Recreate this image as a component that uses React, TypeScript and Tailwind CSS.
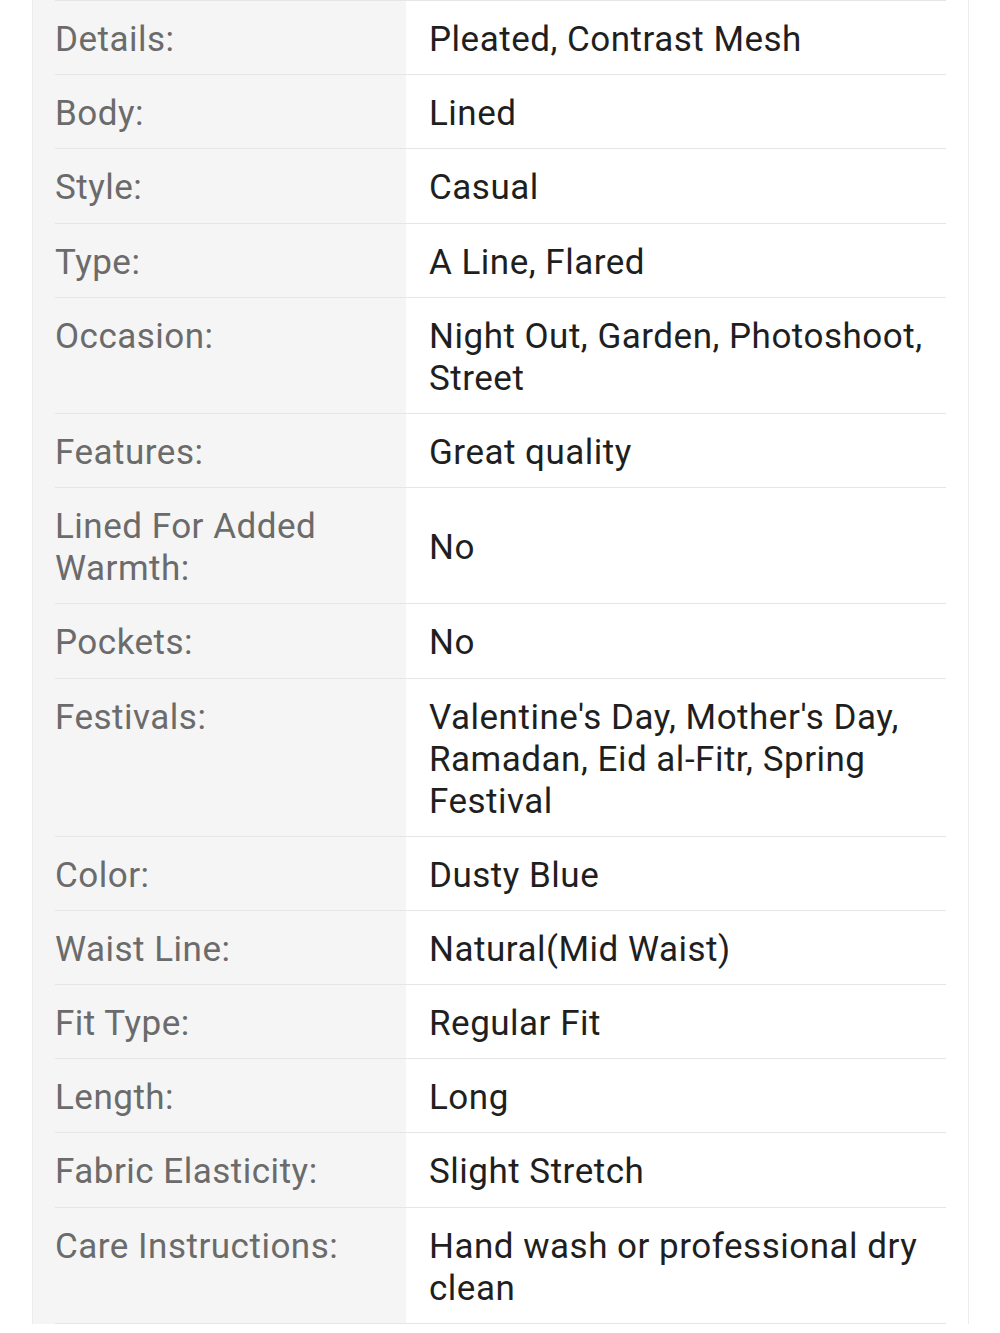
import React from "react";

const rows: [string, string][] = [
  ["Details:", "Pleated, Contrast Mesh"],
  ["Body:", "Lined"],
  ["Style:", "Casual"],
  ["Type:", "A Line, Flared"],
  ["Occasion:", "Night Out, Garden, Photoshoot, Street"],
  ["Features:", "Great quality"],
  ["Lined For Added Warmth:", "No"],
  ["Pockets:", "No"],
  ["Festivals:", "Valentine's Day, Mother's Day, Ramadan, Eid al-Fitr, Spring Festival"],
  ["Color:", "Dusty Blue"],
  ["Waist Line:", "Natural(Mid Waist)"],
  ["Fit Type:", "Regular Fit"],
  ["Length:", "Long"],
  ["Fabric Elasticity:", "Slight Stretch"],
  ["Care Instructions:", "Hand wash or professional dry clean"],
];

export default function App() {
  return (
    <div className="w-[1000px] h-[1333px] overflow-hidden bg-white" style={{ fontFamily: "Roboto, 'Noto Sans', sans-serif" }}>
      <div className="ml-[32px] w-[937px] border-x border-[#ececec] bg-[linear-gradient(to_right,#f5f5f5_373px,#ffffff_373px)] px-[22px]">
        <div className="border-t border-[#e6e6e6]">
          {rows.map(([k, v]) => (
            <div key={k} className="grid grid-cols-[351px_1fr] border-b border-[#e6e6e6] text-[35px] leading-[42px] tracking-[0.5px]">
              <div className="pt-[18px] pb-[13.2px] pr-[16px] text-[#6b6b6b] self-start">{k}</div>
              <div className="pt-[18px] pb-[13.2px] pl-[23px] pr-[12px] text-[#1f1f1f] self-center">{v}</div>
            </div>
          ))}
        </div>
      </div>
    </div>
  );
}
